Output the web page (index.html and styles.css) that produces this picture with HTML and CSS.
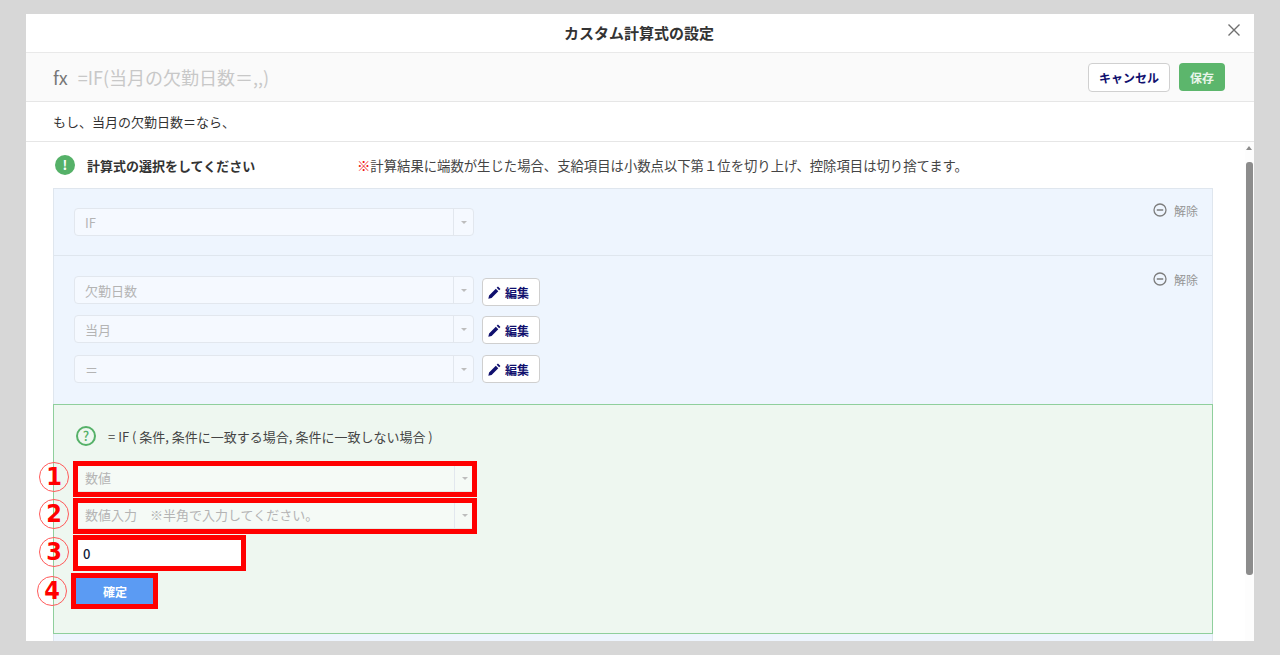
FILE: index.html
```html
<!DOCTYPE html>
<html lang="ja">
<head>
<meta charset="utf-8">
<title>カスタム計算式の設定</title>
<link rel="stylesheet" href="styles.css">
</head>
<body>
<div class="modal">
  <header class="head">
    <h1 class="title">カスタム計算式の設定</h1>
    <svg class="close" width="14" height="14" viewBox="0 0 14 14"><path d="M1.5 1.5l11 11M12.5 1.5l-11 11" stroke="#6f6f6f" stroke-width="1.4" fill="none"/></svg>
  </header>
  <div class="toolbar">
    <span class="fx">fx</span>
    <span class="formula">=IF(当月の欠勤日数＝,,)</span>
    <button class="btn-cancel">キャンセル</button>
    <button class="btn-save">保存</button>
  </div>
  <div class="info">もし、当月の欠勤日数＝なら、</div>
  <div class="scroller">
    <main class="content">
      <div class="heading">
        <span class="alert">!</span>
        <strong class="heading-text">計算式の選択をしてください</strong>
        <span class="notice"><span class="red">※</span>計算結果に端数が生じた場合、支給項目は小数点以下第１位を切り上げ、控除項目は切り捨てます。</span>
      </div>
      <div class="panel">
        <section class="section s1">
          <div class="select">
            <span class="select-text">IF</span><span class="select-arrow"></span>
          </div>
          <div class="remove">
            <svg width="14" height="14" viewBox="0 0 14 14"><circle cx="7" cy="7" r="6" stroke="#7d7d7d" stroke-width="1.3" fill="none"/><path d="M3.8 7h6.4" stroke="#7d7d7d" stroke-width="1.5"/></svg>
            <span>解除</span>
          </div>
        </section>
        <section class="section s2">
          <div class="rows">
            <div class="row">
              <div class="select"><span class="select-text">欠勤日数</span><span class="select-arrow"></span></div>
              <button class="btn-edit down2"><svg width="13" height="13" viewBox="0 0 12 12"><path d="M0.3 11.7l0.7-3 6.2-6.2 2.3 2.3-6.2 6.2zM8 1.7l1.2-1.2 2.3 2.3-1.2 1.2z" fill="#10106e"/></svg>編集</button>
            </div>
            <div class="row">
              <div class="select"><span class="select-text">当月</span><span class="select-arrow"></span></div>
              <button class="btn-edit down1"><svg width="13" height="13" viewBox="0 0 12 12"><path d="M0.3 11.7l0.7-3 6.2-6.2 2.3 2.3-6.2 6.2zM8 1.7l1.2-1.2 2.3 2.3-1.2 1.2z" fill="#10106e"/></svg>編集</button>
            </div>
            <div class="row">
              <div class="select"><span class="select-text">＝</span><span class="select-arrow"></span></div>
              <button class="btn-edit"><svg width="13" height="13" viewBox="0 0 12 12"><path d="M0.3 11.7l0.7-3 6.2-6.2 2.3 2.3-6.2 6.2zM8 1.7l1.2-1.2 2.3 2.3-1.2 1.2z" fill="#10106e"/></svg>編集</button>
            </div>
          </div>
          <div class="remove">
            <svg width="14" height="14" viewBox="0 0 14 14"><circle cx="7" cy="7" r="6" stroke="#7d7d7d" stroke-width="1.3" fill="none"/><path d="M3.8 7h6.4" stroke="#7d7d7d" stroke-width="1.5"/></svg>
            <span>解除</span>
          </div>
        </section>
        <section class="green">
          <div class="help">
            <span class="help-icon">?</span>
            <span class="help-text">= IF ( 条件, 条件に一致する場合, 条件に一致しない場合 )</span>
          </div>
          <div class="form">
            <div class="select g"><span class="select-text">数値</span><span class="select-arrow"></span></div>
            <div class="select g"><span class="select-text">数値入力　※半角で入力してください。</span><span class="select-arrow"></span></div>
            <input class="value" type="text" value="0">
            <button class="btn-ok">確定</button>
          </div>
          <span class="mark m1"></span><span class="mark m2"></span><span class="mark m3"></span><span class="mark m4"></span>
          <span class="num n1">1</span><span class="num n2">2</span><span class="num n3">3</span><span class="num n4">4</span>
        </section>
        <div class="tail"></div>
      </div>
    </main>
    <div class="scrollbar">
      <span class="sb-up"></span>
      <span class="sb-thumb"></span>
    </div>
  </div>
</div>
</body>
</html>
```

FILE: styles.css
```css
* { box-sizing: border-box; }
html, body { margin: 0; height: 100%; }
body {
  background: #d7d7d7;
  padding: 14px 26px;
  overflow: hidden;
  font-family: "Noto Sans CJK JP", "Noto Sans", sans-serif;
  color: #333;
}
button { font-family: inherit; padding: 0; cursor: pointer; }

.modal {
  width: 1228px;
  height: 627px;
  background: #fff;
  display: flex;
  flex-direction: column;
  overflow: hidden;
}
.head {
  height: 39px;
  flex: none;
  border-bottom: 1px solid #e9e9e9;
  display: flex;
  align-items: center;
  justify-content: center;
  position: relative;
  padding-right: 2px;
}
.title { margin: 0; font-size: 15px; font-weight: 700; color: #333; line-height: 36px; }
.close { position: absolute; right: 13px; top: 9px; }

.toolbar {
  height: 49px;
  flex: none;
  background: #fafafa;
  border-bottom: 1px solid #e6e6e6;
  display: flex;
  align-items: center;
  padding: 0 29px 0 27px;
}
.fx { font-size: 18px; color: #777; margin-right: 10px; }
.formula { font-size: 18px; color: #c8c8c8; flex: 1; }
.btn-cancel {
  width: 82px; height: 29px;
  background: #fff;
  border: 1px solid #d0d0d0;
  border-radius: 4px;
  color: #10106e;
  font-size: 12px;
  font-weight: 700;
  margin-right: 9px;
}
.btn-save {
  width: 46px; height: 28px;
  background: #5cb66c;
  border: 0;
  border-radius: 4px;
  color: #e8f5ea;
  font-size: 12px;
  font-weight: 700;
}

.info {
  height: 40px;
  flex: none;
  border-bottom: 1px solid #e6e6e6;
  padding-left: 27px;
  font-size: 13px;
  line-height: 39px;
  color: #333;
}

.scroller { flex: 1; min-height: 0; display: flex; }
.content { flex: 1; min-width: 0; padding: 0 0 0 27px; overflow: hidden; }

.heading { height: 46px; display: flex; align-items: center; padding-bottom: 1px; }
.alert {
  width: 20px; height: 20px;
  margin-left: 2px;
  border-radius: 50%;
  background: #55b168;
  color: #fff;
  font-size: 13px;
  font-weight: 700;
  line-height: 20px;
  text-align: center;
}
.heading-text { font-size: 13px; font-weight: 700; color: #333; margin-left: 12px; width: 270px; line-height: 22px; padding-top: 2px; }
.notice { font-size: 13.35px; color: #444; line-height: 22px; padding-top: 2px; }
.red { color: #f01414; }

.panel { width: 1160px; background: #eef5fe; border: 1px solid #dfe6ee; border-bottom: 0; }
.section { display: flex; justify-content: space-between; align-items: flex-start; padding: 0 14px 0 20px; border-bottom: 1px solid #dfe6ee; }
.s1 { height: 67px; padding-top: 19px; }
.s2 { height: 148px; padding-top: 20px; border-bottom: 0; }
.s1 .remove { margin-top: -5px; }
.s2 .remove { margin-top: -4px; }

.select {
  width: 400px;
  height: 28px;
  display: flex;
  background: #f5f9ff;
  border: 1px solid #e2e7ee;
  border-radius: 4px;
  flex: none;
}
.select.g { background: #f5faf6; border-color: #e3e9e4; }
.select-text { flex: 1; padding-left: 10px; font-size: 13px; line-height: 28px; color: #b4b4b4; }
.select.g .select-text { line-height: 26px; padding-left: 9px; }
.select-arrow {
  width: 20px;
  border-left: 1px solid #e2e7ee;
  position: relative;
}
.select-arrow::after {
  content: "";
  position: absolute;
  left: 7px; top: 12px;
  border: 3px solid transparent;
  border-top: 3px solid #bdbdbd;
  border-bottom: 0;
}

.remove { display: flex; align-items: center; gap: 7px; height: 14px; font-size: 12px; color: #959595; }

.rows { display: flex; flex-direction: column; gap: 11px; }
.row { display: flex; align-items: flex-start; gap: 8px; }
.row + .row + .row { margin-top: 1px; }
.btn-edit {
  width: 58px; height: 28px;
  background: #fff;
  border: 1px solid #cfcfcf;
  border-radius: 4px;
  color: #10106e;
  font-size: 12px;
  font-weight: 700;
  display: flex;
  align-items: center;
  gap: 4px;
  padding-left: 5px;
}
.down2 { margin: 2px 0 -2px; }
.down1 { margin: 1px 0 -1px; }

.green {
  position: relative;
  height: 230px;
  margin: 0 -1px;
  padding: 21px 0 0 21px;
  background: #eef7f0;
  border: 1px solid #8fcf9c;
}
.help { display: flex; align-items: center; height: 20px; }
.help-icon {
  width: 20px; height: 20px;
  margin-left: 1px;
  border: 2px solid #55b168;
  border-radius: 50%;
  color: #55b168;
  font-size: 13px;
  font-weight: 500;
  line-height: 16px;
  text-align: center;
}
.help-text { font-size: 13px; color: #444; margin-left: 12px; line-height: 22px; padding-top: 1px; }

.form { display: flex; flex-direction: column; align-items: flex-start; margin-top: 18px; gap: 9px; }
.value {
  width: 170px; height: 28px;
  margin-top: 1px;
  background: #fff;
  border: 1px solid #ddd;
  padding: 0 7px;
  font-family: inherit;
  font-size: 13px;
  font-weight: 500;
  color: #111a3a;
  outline: 0;
}
.btn-ok {
  width: 80px; height: 28px;
  margin-top: 1px;
  background: #5b9bf3;
  border: 0;
  color: #fff;
  font-size: 12px;
  font-weight: 700;
}

.mark { position: absolute; border: 5px solid #f00; }
.m1 { left: 19px; top: 56px; width: 404px; height: 36px; }
.m2 { left: 19px; top: 93px; width: 404px; height: 36px; }
.m3 { left: 19px; top: 130px; width: 173px; height: 36px; }
.m4 { left: 17px; top: 168px; width: 87px; height: 36px; }

.num {
  position: absolute;
  width: 30px; height: 30px;
  border: 1px solid #ff5a5a;
  border-radius: 50%;
  color: #f00;
  font-family: "DejaVu Sans", sans-serif;
  font-stretch: condensed;
  font-size: 25px;
  font-weight: 700;
  line-height: 27px;
  text-align: center;
}
.n1 { left: -15px; top: 57px; }
.n2 { left: -15px; top: 94px; }
.n3 { left: -15px; top: 132px; }
.n4 { left: -17px; top: 171px; }

.tail { height: 20px; }

.scrollbar { width: 9px; flex: none; background: #fdfdfd; position: relative; padding-top: 20px; }
.sb-up {
  position: absolute;
  left: 1px; top: 4px;
  border: 3.5px solid transparent;
  border-bottom: 4px solid #8c8c8c;
  border-top: 0;
}
.sb-thumb { display: block; width: 7px; height: 413px; margin-left: 1px; background: #8c8c8c; border-radius: 3px; }
```
